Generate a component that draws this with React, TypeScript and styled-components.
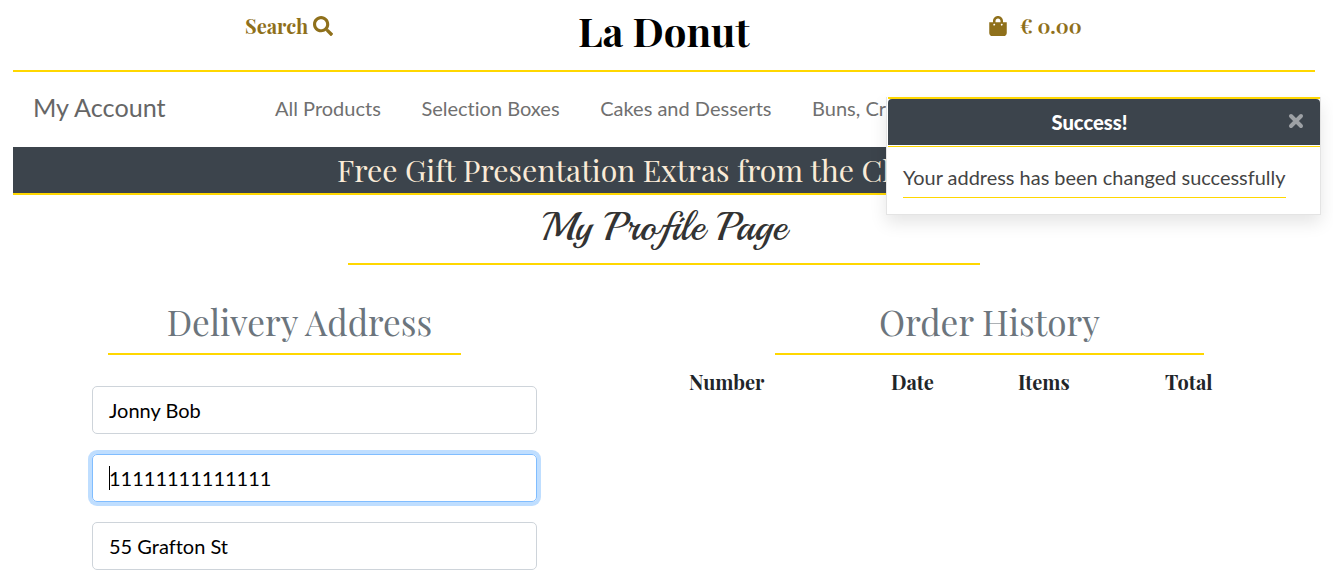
import React from "react";
import styled, { createGlobalStyle } from "styled-components";
import { FaSearch, FaShoppingBag } from "react-icons/fa";

const gold = "#ffd700";
const slate = "#3c444c";
const serif = `"Playfair Display", "Liberation Serif", serif`;

const GlobalStyle = createGlobalStyle`
  * { box-sizing: border-box; }
  body { margin: 0; background: #fff; font-family: Lato, sans-serif; overflow: hidden; }
`;

const Page = styled.div`
  width: 1333px;
  height: 584px;
  padding: 0 18px 0 13px;
  overflow: hidden;
  position: relative;
`;

const Header = styled.header`
  height: 72px;
  border-bottom: 2px solid ${gold};
  display: grid;
  grid-template-columns: 565px 410px 1fr;
  font-family: ${serif};
  font-weight: 700;
  white-space: nowrap;
`;

const HeaderLink = styled.a`
  display: flex;
  align-items: center;
  height: 52px;
  color: #8f701b;
  font-size: 20px;
`;

const HeaderText = styled.span`
  padding-bottom: 2px;
`;

const SearchLink = styled(HeaderLink)`
  padding-left: 232px;
  svg { margin-left: 5px; }
`;

const Bag = styled(HeaderLink)`
  svg { margin-right: 12px; }
`;

const Logo = styled.h1`
  margin: 0;
  font-size: 40.2px;
  line-height: 62px;
  color: #000;
`;

const Nav = styled.nav`
  height: 75px;
  display: flex;
  align-items: center;
  padding: 0 0 4px 20px;
  color: #666;
  white-space: nowrap;
  font-variant-ligatures: none;
`;

const Account = styled.span`
  width: 242px;
  margin-top: -2px;
  font-size: 25.2px;
`;

const NavLinks = styled.div`
  display: flex;
  gap: 40.6px;
  font-size: 20px;
  color: #707070;
`;

const Banner = styled.div`
  height: 48px;
  padding-left: 324px;
  background: ${slate};
  border-bottom: 2px solid ${gold};
  color: #faebd7;
  font: 30.2px/46px ${serif};
  white-space: nowrap;
  overflow: hidden;
`;

const Title = styled.h2`
  width: 632px;
  height: 70px;
  margin: 0 0 0 335px;
  border-bottom: 2px solid ${gold};
  text-align: center;
  font: 400 40px/64px Playball, "Liberation Serif", serif;
  color: #333;
`;

const Columns = styled.main`
  display: grid;
  grid-template-columns: 445px 1fr;
  column-gap: 137px;
  padding: 30px 0 0 79px;
`;

const SectionTitle = styled.h3<{ $width: number; $left: number; $indent?: number }>`
  width: ${(p) => p.$width}px;
  height: 60px;
  margin: 0 0 0 ${(p) => p.$left}px;
  padding-left: ${(p) => p.$indent ?? 0}px;
  border-bottom: 2px solid ${gold};
  text-align: center;
  font: 400 35.2px/54px ${serif};
  color: #6c757d;
`;

const Fields = styled.form`
  display: grid;
  gap: 20px;
  margin-top: 31px;
`;

const Field = styled.div<{ $focused?: boolean }>`
  height: 48px;
  padding: 0 16px;
  display: flex;
  align-items: center;
  border: 1px solid ${(p) => (p.$focused ? "#80bdff" : "#ced4da")};
  border-radius: 5px;
  box-shadow: ${(p) => (p.$focused ? "0 0 0 4px rgba(0, 123, 255, 0.25)" : "none")};
  font-size: 20px;
  font-variant-ligatures: none;
  color: #000;
`;

const Caret = styled.span`
  width: 1px;
  height: 24px;
  margin-right: -1px;
  background: #000;
`;

const OrderHeads = styled.div`
  display: grid;
  grid-template-columns: 202px 127px 147px 1fr;
  padding-left: 15px;
  font: 700 20px/54px ${serif};
  color: #212529;
`;

const Toast = styled.aside`
  position: absolute;
  left: 886px;
  top: 97px;
  width: 435px;
  height: 118px;
  border: 1px solid #e4e4e4;
  border-top: 0;
  background: #fff;
  box-shadow: 0 8px 16px rgba(0, 0, 0, 0.1);
  padding-left: 1px;
`;

const ToastHeader = styled.div`
  height: 50px;
  border-top: 2px solid ${gold};
  border-bottom: 1px solid ${gold};
`;

const ToastBar = styled.div`
  height: 46px;
  display: flex;
  align-items: center;
  padding: 0 16px 0 0;
  border-radius: 4px 4px 0 0;
  background: ${slate};
  color: #fff;
  font-size: 20.2px;
  font-weight: 700;
  svg { margin-top: -3px; }
`;

const ToastTitle = styled.strong`
  flex: 1;
  text-align: center;
  padding-left: 3px;
`;

const Message = styled.p`
  display: inline-block;
  width: 383px;
  height: 35px;
  margin: 16px 0 0 15px;
  border-bottom: 1px solid ${gold};
  font-size: 19.95px;
  line-height: 28px;
  color: #444;
  white-space: nowrap;
`;

const fields = ["Jonny Bob", "11111111111111", "55 Grafton St"];

export default function App() {
  return (
    <>
      <GlobalStyle />
      <Page>
        <Header>
          <SearchLink>
            <HeaderText>Search</HeaderText>
            <FaSearch size={20} />
          </SearchLink>
          <Logo>La Donut</Logo>
          <Bag>
            <FaShoppingBag size={20} />
            <HeaderText>€ 0.00</HeaderText>
          </Bag>
        </Header>
        <Nav>
          <Account>My Account</Account>
          <NavLinks>
            <span>All Products</span>
            <span>Selection Boxes</span>
            <span>Cakes and Desserts</span>
            <span>Buns, Cr</span>
          </NavLinks>
        </Nav>
        <Banner>Free Gift Presentation Extras from the Cl</Banner>
        <Title>My Profile Page</Title>
        <Columns>
          <section>
            <SectionTitle $width={353} $left={16} $indent={30}>Delivery Address</SectionTitle>
            <Fields>
              {fields.map((value, i) => (
                <Field key={value} $focused={i === 1}>
                  {i === 1 && <Caret />}
                  {value}
                </Field>
              ))}
            </Fields>
          </section>
          <section>
            <SectionTitle $width={429} $left={101}>Order History</SectionTitle>
            <OrderHeads>
              <span>Number</span>
              <span>Date</span>
              <span>Items</span>
              <span>Total</span>
            </OrderHeads>
          </section>
        </Columns>
        <Toast>
          <ToastHeader>
            <ToastBar>
              <ToastTitle>Success!</ToastTitle>
              <svg width="16" height="16" viewBox="0 0 16 16" stroke="#9da1a5" strokeWidth="4" strokeLinecap="round">
                <path d="M3 3 13 13M13 3 3 13" />
              </svg>
            </ToastBar>
          </ToastHeader>
          <Message>Your address has been changed successfully</Message>
        </Toast>
      </Page>
    </>
  );
}
